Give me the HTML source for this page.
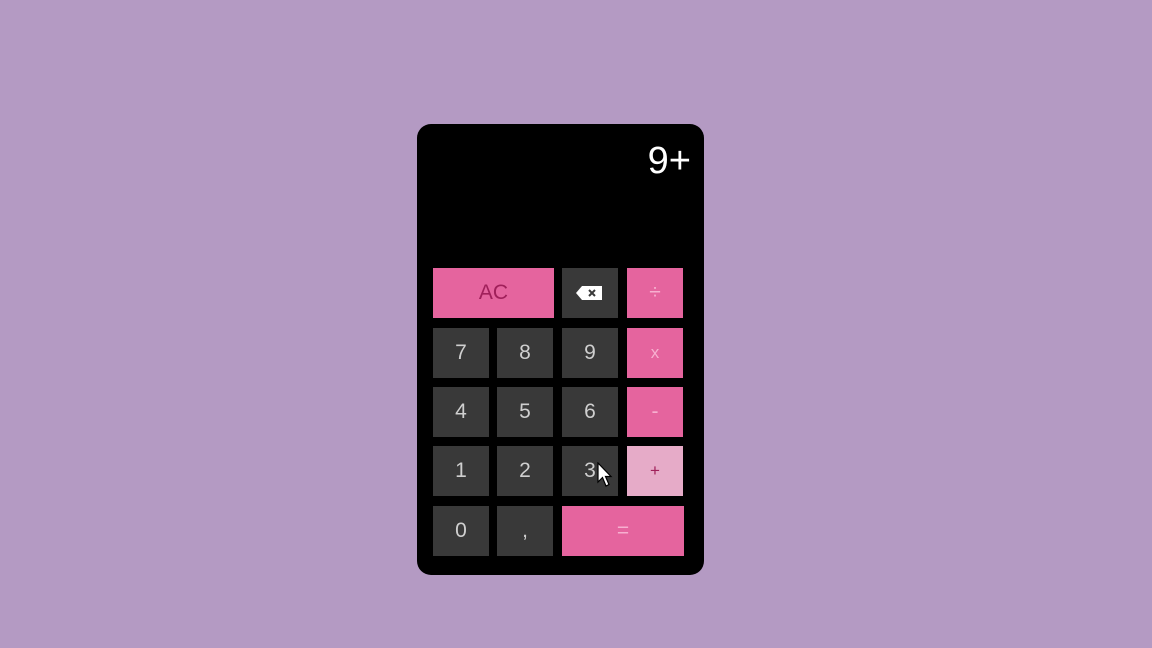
<!DOCTYPE html>
<html><head><style>
body{margin:0;width:1152px;height:648px;background:#b49ac3;position:relative;overflow:hidden;font-family:"Liberation Sans",sans-serif}
.calc{position:absolute;left:417px;top:124px;width:287px;height:451px;background:#000;border-radius:14px}
.d{position:absolute;right:13px;top:16px;color:#fff;font-size:38px}
.k{position:absolute;width:56px;height:50px;background:#393939;color:#cfcfcf;font-size:21px;display:flex;align-items:center;justify-content:center}
.p{background:#e5649e;color:#f7b0d0}
</style></head><body>
<div class="calc"><div class="d">9+</div></div>
<div class="k p" style="left:433px;top:268px;width:121px;color:#a0205a">AC</div>
<div class="k" style="left:562px;top:268px"><svg width="28" height="16" viewBox="0 0 28 16"><path d="M6 1H26V15H6L0 8Z" fill="#fff"/><path d="M13 5l6 6M19 5l-6 6" stroke="#393939" stroke-width="2"/></svg></div>
<div class="k p" style="left:627px;top:268px">÷</div>
<div class="k" style="left:433px;top:328px">7</div>
<div class="k" style="left:497px;top:328px">8</div>
<div class="k" style="left:562px;top:328px">9</div>
<div class="k p" style="left:627px;top:328px;font-size:17px">x</div>
<div class="k" style="left:433px;top:387px">4</div>
<div class="k" style="left:497px;top:387px">5</div>
<div class="k" style="left:562px;top:387px">6</div>
<div class="k p" style="left:627px;top:387px">-</div>
<div class="k" style="left:433px;top:446px">1</div>
<div class="k" style="left:497px;top:446px">2</div>
<div class="k" style="left:562px;top:446px">3</div>
<div class="k" style="left:627px;top:446px;background:#e6abc8;color:#a0205a;font-size:17px">+</div>
<div class="k" style="left:433px;top:506px">0</div>
<div class="k" style="left:497px;top:506px">,</div>
<div class="k p" style="left:562px;top:506px;width:122px">=</div>
<svg style="position:absolute;left:597px;top:462px" width="16" height="26" viewBox="0 0 16 26"><path d="M1 1V20L5.5 15.5L9 24L12 22.5L8.5 14.5H14Z" fill="#fff" stroke="#000" stroke-width="1.2"/></svg>
</body></html>
